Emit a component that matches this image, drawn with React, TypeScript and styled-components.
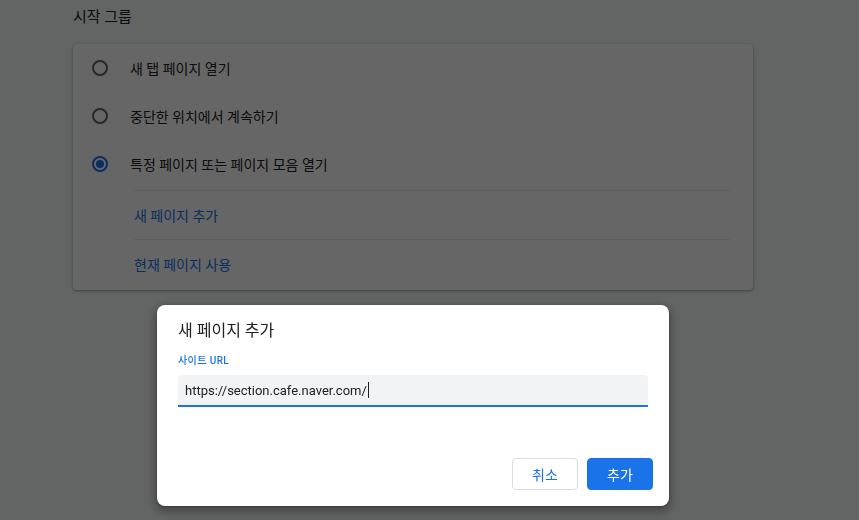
import React from "react";
import styled, { createGlobalStyle } from "styled-components";

const GlobalStyle = createGlobalStyle`
  html, body {
    margin: 0;
    padding: 0;
    background: #f8f9fa;
    font-family: Roboto, "Noto Sans CJK KR", "Noto Sans", sans-serif;
    color: #202124;
  }
  * { box-sizing: border-box; }
`;

const Page = styled.div`
  width: 859px;
  height: 520px;
  padding-left: 73px;
  overflow: hidden;
`;

const SectionTitle = styled.div`
  font-size: 15px;
  line-height: 20px;
  padding: 7px 0 17px;
`;

const Card = styled.div`
  width: 680px;
  background: #fff;
  border-radius: 4px;
  box-shadow: 0 1px 2px 0 rgba(60, 64, 67, 0.3),
    0 1px 3px 1px rgba(60, 64, 67, 0.15);
  padding-bottom: 2px;
`;

const RadioRow = styled.div`
  display: flex;
  align-items: center;
  height: 48px;
  padding-left: 19px;
  font-size: 14px;
  gap: 22px;
`;

const Radio = styled.span<{ $checked?: boolean }>`
  width: 16px;
  height: 16px;
  border-radius: 50%;
  border: 2px solid ${(p) => (p.$checked ? "#1a73e8" : "#5f6368")};
  display: flex;
  align-items: center;
  justify-content: center;
  &::after {
    content: "";
    width: 8px;
    height: 8px;
    border-radius: 50%;
    background: ${(p) => (p.$checked ? "#1a73e8" : "transparent")};
  }
`;

const LinkList = styled.div`
  margin: 2px 23px 0 61px;
`;

const LinkRow = styled.div`
  height: 49px;
  border-top: 1px solid #e8eaed;
  display: flex;
  align-items: center;
  font-size: 14px;
  color: #1a73e8;
`;

const Overlay = styled.div`
  position: fixed;
  inset: 0;
  background: rgba(0, 0, 0, 0.6);
  padding: 305px 0 0 157px;
`;

const Dialog = styled.div`
  width: 512px;
  height: 201px;
  background: #fff;
  border-radius: 8px;
  box-shadow: 0 4px 10px 3px rgba(0, 0, 0, 0.25), 0 1px 3px rgba(0, 0, 0, 0.3);
  padding: 16px 16px 16px 21px;
  display: flex;
  flex-direction: column;
`;

const DialogTitle = styled.div`
  font-size: 16px;
  line-height: 20px;
  color: #202124;
`;

const FieldLabel = styled.div`
  margin-top: 14px;
  font-size: 10px;
  line-height: 12px;
  font-weight: 500;
  letter-spacing: 0.4px;
  color: #1a73e8;
`;

const InputBox = styled.div`
  margin-top: 8px;
  width: 470px;
  height: 32px;
  background: #f1f3f4;
  border-radius: 4px 4px 0 0;
  border-bottom: 2px solid #1a73e8;
  display: flex;
  align-items: center;
  padding: 0 7px;
  font-size: 13px;
  color: #202124;
`;

const Caret = styled.span`
  display: inline-block;
  width: 1px;
  height: 16px;
  background: #202124;
  margin-left: 1px;
`;

const Actions = styled.div`
  margin-top: auto;
  display: flex;
  justify-content: flex-end;
  gap: 9px;
`;

const Button = styled.button<{ $primary?: boolean }>`
  height: 32px;
  min-width: 66px;
  padding: 0 16px;
  border-radius: 4px;
  font-family: inherit;
  font-size: 14px;
  font-weight: 400;
  border: 1px solid ${(p) => (p.$primary ? "#1a73e8" : "#dadce0")};
  background: ${(p) => (p.$primary ? "#1a73e8" : "#fff")};
  color: ${(p) => (p.$primary ? "#fff" : "#1a73e8")};
`;

const options = [
  { label: "새 탭 페이지 열기", checked: false },
  { label: "중단한 위치에서 계속하기", checked: false },
  { label: "특정 페이지 또는 페이지 모음 열기", checked: true },
];

export default function App() {
  return (
    <>
      <GlobalStyle />
      <Page>
        <SectionTitle>시작 그룹</SectionTitle>
        <Card>
          {options.map((o) => (
            <RadioRow key={o.label}>
              <Radio $checked={o.checked} />
              {o.label}
            </RadioRow>
          ))}
          <LinkList>
            <LinkRow>새 페이지 추가</LinkRow>
            <LinkRow>현재 페이지 사용</LinkRow>
          </LinkList>
        </Card>
      </Page>
      <Overlay>
        <Dialog>
          <DialogTitle>새 페이지 추가</DialogTitle>
          <FieldLabel>사이트 URL</FieldLabel>
          <InputBox>
            https://section.cafe.naver.com/
            <Caret />
          </InputBox>
          <Actions>
            <Button>취소</Button>
            <Button $primary>추가</Button>
          </Actions>
        </Dialog>
      </Overlay>
    </>
  );
}
